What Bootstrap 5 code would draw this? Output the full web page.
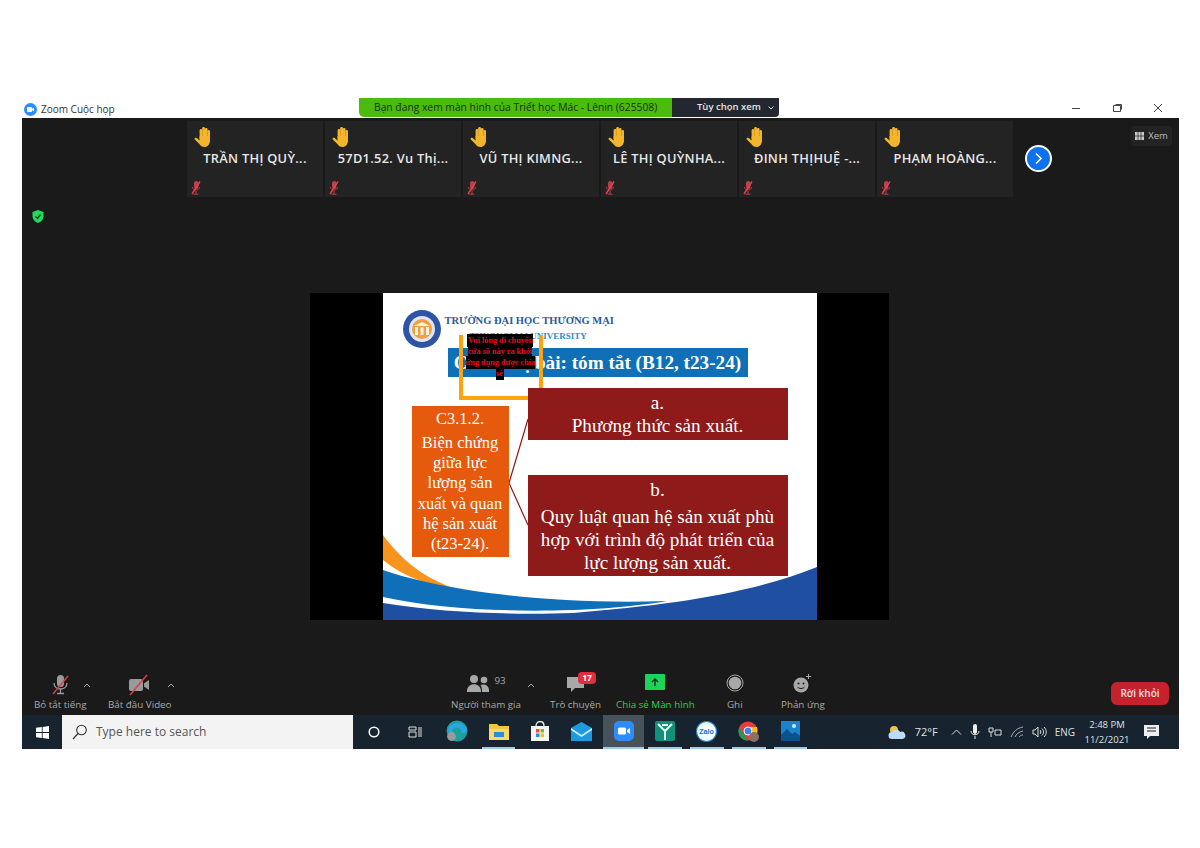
<!DOCTYPE html>
<html lang="vi">
<head>
  <meta charset="UTF-8" />
  <title>Zoom Cuộc họp</title>
  <link href="https://cdn.jsdelivr.net/npm/bootstrap@5.3.3/dist/css/bootstrap.min.css" rel="stylesheet" />
  <style>
    body { background: #fff; font-family: "Open Sans", "Liberation Sans", sans-serif; overflow: hidden; }
    .zwin { margin: 98px 0 0 22px; width: 1157px; }
    .ztitle { height: 20px; font-size: 10px; color: #333; }
    .ztitle-app { width: 337px; padding: 2px 0 0 2px; gap: 4px; }
    .zlogo { width: 13px; height: 13px; border-radius: 50%; background: #2d8cff; }
    .zbanner { width: 313px; height: 19px; padding-left: 15px; background: #4bbb0c; color: #16300a; font-size: 10.3px; border-bottom-left-radius: 5px; white-space: nowrap; }
    .zbanner-btn { width: 107px; height: 19px; padding-left: 25px; gap: 7px; background: #232730; color: #e4e4e4; font-size: 9.5px; font-weight: 600; border-bottom-right-radius: 4px; white-space: nowrap; }
    .zcontrols { margin-left: auto; width: 92px; margin-right: 16px; color: #444; }
    .zstage { height: 597px; background: #1a1a1a; }
    .zstrip { height: 82px; padding: 3px 0 0 165px; gap: 2px; }
    .ztile { width: 136px; height: 76px; background: #232323; color: #e8e8e8; font-size: 12.8px; font-weight: 600; padding: 5px 0 0 7px; }
    .ztile-name { margin: 2px 0 0 -7px; height: 23px; text-align: center; white-space: nowrap; letter-spacing: .3px; }
    .zmute { margin: 9px 0 0 -3px; }
    .znext { width: 27px; height: 27px; margin: 24px 0 0 10px; border-radius: 50%; background: #0e72ed; border: 2px solid #fff; }
    .zview { width: 41px; height: 20px; margin: 5px 7px 0 auto; border-radius: 4px; background: #232323; color: #bbb; font-size: 9.5px; }
    .zshield { height: 36px; padding: 3px 0 0 10px; }
    .zshare-row { height: 327px; margin-top: 57px; padding-left: 288px; }
    .zshare { width: 579px; height: 327px; background: #000; }
    .zslide { position: relative; width: 434px; height: 327px; background: #fff; font-family: "Liberation Serif", serif; overflow: hidden; }
    .zslide > * { position: absolute; }
    .sl-art { left: 0; top: 0; }
    .sl-uni1 { left: 62px; top: 20px; font-size: 10.5px; font-weight: 700; color: #2a5a9a; white-space: nowrap; }
    .sl-uni2 { left: 87px; top: 37px; font-size: 9px; font-weight: 700; color: #2c8fc4; white-space: nowrap; }
    .sl-head { left: 65px; top: 55px; width: 300px; height: 29px; background: #0f70b7; color: #fff; font-size: 19.2px; font-weight: 700; line-height: 29px; text-align: center; white-space: nowrap; }
    .sl-warn { left: 83px; top: 42px; width: 69px; text-align: center; font-size: 8.2px; font-weight: 700; line-height: 11px; color: #e01020; white-space: nowrap; }
    .sl-warn span { background: #000; padding: 2px 1px; }
    .sl-frame { left: 76px; top: 42px; width: 84px; height: 65px; border: 4px solid #fca311; border-top: 0; }
    .sl-orange { left: 29px; top: 113px; width: 97px; height: 151px; background: #e55a0c; color: #fff; font-size: 16.5px; line-height: 20.2px; text-align: center; white-space: nowrap; }
    .sl-code { line-height: 25px; margin-bottom: 2px; }
    .sl-red { left: 145px; width: 260px; background: #8e1a1a; color: #fff; text-align: center; font-size: 19.2px; line-height: 23px; padding-top: 3px; white-space: nowrap; }
    .sl-a { top: 95px; height: 52px; }
    .sl-b { top: 182px; height: 101px; }
    .sl-b-mark { margin-bottom: 4px; }
    .zbar { position: relative; height: 50px; margin-top: -50px; background: #1a1a1a; color: #a9a9a9; font-size: 9.8px; padding-top: 9px; }
    .zbtn { height: 38px; text-align: center; flex-shrink: 0; }
    .zicon { position: relative; display: flex; justify-content: center; height: 24px; }
    .zlabel { white-space: nowrap; line-height: 13px; }
    .zcaret { margin-top: 8px; }
    .zb-mic { margin-left: 12px; width: 52px; }
    .zb-video { margin-left: 17px; width: 62px; }
    .zb-people { margin-left: 276px; width: 70px; gap: 4px; }
    .zb-chat { margin-left: 15px; width: 51px; }
    .zb-share { margin-left: 15px; width: 78px; color: #22d355; }
    .zb-rec { margin-left: 33px; width: 15px; }
    .zb-react { margin-left: 39px; width: 42px; }
    .zc-tight { margin-left: -3px; }
    .zc-wide { margin-left: 6px; }
    .zbadge { position: absolute; left: 28px; top: -2px; width: 18px; height: 12px; background: #e02f3c; border-radius: 4px; color: #fff; font-size: 8.5px; font-weight: 700; line-height: 12px; text-align: center; }
    .zleave { width: 58px; height: 23px; margin: 8px 10px 0 auto; background: #c4232d; color: #f2e0e0; font-size: 10px; font-weight: 600; border-radius: 6px; }
    .ztask { height: 34px; background: #17242f; color: #dfe3e6; font-size: 10.5px; }
    .zstart { width: 40px; }
    .zsearch { width: 291px; height: 34px; background: #f3f3f3; color: #555; font-size: 12px; padding-left: 10px; gap: 8px; }
    .zcortana { width: 41px; }
    .ztaskview { width: 42px; }
    .zslot { width: 33.7px; height: 34px; margin: 0 4px; border-bottom: 2px solid transparent; }
    .zslot-on { border-bottom-color: #9ccbef; }
    .zslot-act { width: 41.7px; margin: 0; background: #47525b; }
    .ztray { margin-left: auto; padding-right: 20px; gap: 8px; }
    .ztemp { width: 24px; font-size: 11px; }
    .zeng { font-size: 10px; }
    .zclock { font-size: 9.5px; line-height: 15px; text-align: center; width: 48px; margin-right: 5px; }
  </style>
</head>
<body>
  <svg width="0" height="0" class="d-block">
    <symbol id="hand" viewBox="0 0 18 20">
      <g fill="#f2b52c">
        <rect x="5.6" y="2" width="2.8" height="11" rx="1.4"/>
        <rect x="8.2" y="0" width="2.8" height="12" rx="1.4"/>
        <rect x="10.8" y="1" width="2.8" height="11" rx="1.4"/>
        <rect x="13.4" y="3" width="2.6" height="10" rx="1.3"/>
        <path d="M5.6 9h10.4v4.500c0 4-2.500 6.500-5.600 6.500-2.400 0-3.800-1.200-5-3L.8 12.600c-.9-1.200.7-2.600 1.900-1.600l2.900 2.400z"/>
      </g>
    </symbol>
    <symbol id="mutemic" viewBox="0 0 10 14">
      <rect x="3" y="0" width="4.4" height="8" rx="2.2" fill="#b8404c"/>
      <path d="M1.500 6c0 4 7 4 7 0M5 10v3M2.500 13.200h5" fill="none" stroke="#b8404c" stroke-width="1"/>
      <path d="M9 .5 1 13" stroke="#e8404c" stroke-width="1.400"/>
    </symbol>
  </svg>

  <div class="zwin">
    <div class="ztitle d-flex">
      <div class="ztitle-app d-flex align-items-center">
        <span class="zlogo d-flex align-items-center justify-content-center"><svg width="7" height="5" viewBox="0 0 7 5"><rect width="5" height="5" rx="1" fill="#fff"/><path d="M5 2l2-1.500v4L5 3z" fill="#fff"/></svg></span>
        <span>Zoom Cuộc họp</span>
      </div>
      <div class="zbanner d-flex align-items-center">Bạn đang xem màn hình của Triết học Mác - Lênin (625508)</div>
      <div class="zbanner-btn d-flex align-items-center">Tùy chọn xem <svg width="6" height="4" viewBox="0 0 6 4"><path d="M.5.500 3 3l2.500-2.500" fill="none" stroke="#ddd"/></svg></div>
      <div class="zcontrols d-flex align-items-center justify-content-between">
        <svg width="10" height="10" viewBox="0 0 10 10"><path d="M1 5.500h8" stroke="#444"/></svg>
        <svg width="10" height="10" viewBox="0 0 10 10"><path d="M1.500 2.500h7v6h-7z" fill="none" stroke="#444"/><path d="M3.500 1.500h6v5" fill="none" stroke="#444"/></svg>
        <svg width="10" height="10" viewBox="0 0 10 10"><path d="M1 1l8 8M9 1l-8 8" stroke="#444"/></svg>
      </div>
    </div>

    <div class="zstage">
      <div class="zstrip d-flex">
        <div class="ztile"><svg width="18" height="20"><use href="#hand"/></svg><div class="ztile-name">TRẦN THỊ QUỲ...</div><svg class="zmute d-block" width="10" height="14"><use href="#mutemic"/></svg></div>
        <div class="ztile"><svg width="18" height="20"><use href="#hand"/></svg><div class="ztile-name">57D1.52. Vu Thị...</div><svg class="zmute d-block" width="10" height="14"><use href="#mutemic"/></svg></div>
        <div class="ztile"><svg width="18" height="20"><use href="#hand"/></svg><div class="ztile-name">VŨ THỊ KIMNG...</div><svg class="zmute d-block" width="10" height="14"><use href="#mutemic"/></svg></div>
        <div class="ztile"><svg width="18" height="20"><use href="#hand"/></svg><div class="ztile-name">LÊ THỊ QUỲNHA...</div><svg class="zmute d-block" width="10" height="14"><use href="#mutemic"/></svg></div>
        <div class="ztile"><svg width="18" height="20"><use href="#hand"/></svg><div class="ztile-name">ĐINH THỊHUỆ -...</div><svg class="zmute d-block" width="10" height="14"><use href="#mutemic"/></svg></div>
        <div class="ztile"><svg width="18" height="20"><use href="#hand"/></svg><div class="ztile-name">PHẠM HOÀNG...</div><svg class="zmute d-block" width="10" height="14"><use href="#mutemic"/></svg></div>
        <div class="znext d-flex align-items-center justify-content-center flex-shrink-0"><svg width="9" height="13" viewBox="0 0 9 13"><path d="M2 1.500 7 6.500 2 11.500" fill="none" stroke="#fff" stroke-width="1.600"/></svg></div>
        <div class="zview d-flex align-items-center justify-content-center gap-1 flex-shrink-0"><svg width="9" height="8" viewBox="0 0 9 8"><path d="M0 0h9v8H0z" fill="#c9c9c9"/><path d="M3 0v8M6 0v8M0 4h9" stroke="#232323" stroke-width=".7"/></svg>Xem</div>
      </div>

      <div class="zshield"><svg width="12" height="13" viewBox="0 0 12 13"><path d="M6 0l5.500 2v4.500c0 3-2.500 5.300-5.500 6.500C3 11.800.5 9.500.5 6.500V2z" fill="#23d959"/><path d="M3.500 6.500 5.500 8.500 8.500 4.500" fill="none" stroke="#14492a" stroke-width="1.400"/></svg></div>

      <div class="zshare-row d-flex">
        <div class="zshare d-flex justify-content-center">
          <div class="zslide">
            <svg class="sl-art" width="434" height="327" viewBox="0 0 434 327">
              <circle cx="39" cy="36" r="19" fill="#2f54a6"/>
              <circle cx="39" cy="36" r="13" fill="#dfe7f3"/>
              <circle cx="39" cy="36" r="10" fill="#f0a040"/>
              <path d="M32 42v-8h3v8zM37.500 42v-8h3v8zM43 42v-8h3v8zM31 33l8-4 8 4z" fill="#fff3dd"/>
              <path d="M126 190 145 126M126 190 145 232" fill="none" stroke="#8e1a1a" stroke-width="1.200"/>
              <path d="M0 242C22 272 50 292 92 301 50 294 20 284 0 267z" fill="#f7941d"/>
              <path d="M0 277C60 298 170 312 284 308 210 321 80 322 0 304z" fill="#0f6fb8"/>
              <path d="M0 310C60 320 130 322 190 320 290 312 370 300 434 274V327H0z" fill="#1e4fa0"/>
            </svg>
            <div class="sl-uni1">TRƯỜNG ĐẠI HỌC THƯƠNG MẠI</div>
            <div class="sl-uni2">THUONGMAI UNIVERSITY</div>
            <div class="sl-head">Chuẩn bị bài: tóm tắt (B12, t23-24)</div>
            <div class="sl-warn"><span>Vui lòng di chuyển<br>cửa sổ này ra khỏi<br>ứng dụng được chia<br>sẻ</span></div>
            <div class="sl-frame"></div>
            <div class="sl-orange"><div class="sl-code">C3.1.2.</div>Biện chứng<br>giữa lực<br>lượng sản<br>xuất và quan<br>hệ sản xuất<br>(t23-24).</div>
            <div class="sl-red sl-a">a.<br>Phương thức sản xuất.</div>
            <div class="sl-red sl-b"><div class="sl-b-mark">b.</div>Quy luật quan hệ sản xuất phù<br>hợp với trình độ phát triển của<br>lực lượng sản xuất.</div>
          </div>
        </div>
      </div>
    </div>

    <div class="zbar d-flex">
      <div class="zbtn zb-mic">
        <div class="zicon"><svg width="20" height="22" viewBox="0 0 20 22"><rect x="7" y="1" width="7" height="12" rx="3.500" fill="#9a9a9a"/><path d="M4 9c0 8 13 8 13 0M10.500 15v4M7 19.500h7" fill="none" stroke="#9a9a9a" stroke-width="1.300"/><path d="M18 2 3 20" stroke="#d6404c" stroke-width="1.500"/></svg></div>
        <div class="zlabel">Bỏ tắt tiếng</div>
      </div>
      <svg class="zcaret zc-tight" width="8" height="6" viewBox="0 0 8 6"><path d="M1 5l3-3 3 3" fill="none" stroke="#aaa"/></svg>
      <div class="zbtn zb-video">
        <div class="zicon"><svg width="24" height="22" viewBox="0 0 24 22"><rect x="2" y="5" width="14" height="12" rx="2" fill="#9a9a9a"/><path d="M17 9.500 22 6v10l-5-3.500z" fill="#9a9a9a"/><path d="M20 1 3 21" stroke="#d6404c" stroke-width="1.500"/></svg></div>
        <div class="zlabel">Bắt đầu Video</div>
      </div>
      <svg class="zcaret zc-tight" width="8" height="6" viewBox="0 0 8 6"><path d="M1 5l3-3 3 3" fill="none" stroke="#aaa"/></svg>

      <div class="zbtn zb-people">
        <div class="zicon gap-1"><svg width="24" height="19" viewBox="0 0 24 19"><circle cx="8" cy="5" r="4" fill="#a8a8a8"/><circle cx="18" cy="6" r="3.300" fill="#a8a8a8"/><path d="M1 17c0-9 14-9 14 0v1H1zM16 17c0-3-.5-4.500-1.500-6 3-1.500 8.500 0 8.500 5v2h-7z" fill="#a8a8a8"/></svg><span>93</span></div>
        <div class="zlabel">Người tham gia</div>
      </div>
      <svg class="zcaret zc-wide" width="8" height="6" viewBox="0 0 8 6"><path d="M1 5l3-3 3 3" fill="none" stroke="#aaa"/></svg>
      <div class="zbtn zb-chat">
        <div class="zicon"><svg width="18" height="19" viewBox="0 0 18 19"><path d="M0 3h17v11H8l-4 4v-4H0z" fill="#a8a8a8"/></svg><span class="zbadge">17</span></div>
        <div class="zlabel">Trò chuyện</div>
      </div>
      <div class="zbtn zb-share">
        <div class="zicon"><svg width="20" height="17" viewBox="0 0 20 17"><rect width="20" height="16" rx="1" fill="#1fd35a"/><path d="M10 12V5M7 8l3-3 3 3" fill="none" stroke="#12331f" stroke-width="1.400"/></svg></div>
        <div class="zlabel">Chia sẻ Màn hình</div>
      </div>
      <div class="zbtn zb-rec">
        <div class="zicon"><svg width="18" height="18" viewBox="0 0 18 18" class="flex-shrink-0"><circle cx="9" cy="9" r="8" fill="none" stroke="#a8a8a8"/><circle cx="9" cy="9" r="6.300" fill="#a8a8a8"/></svg></div>
        <div class="zlabel">Ghi</div>
      </div>
      <div class="zbtn zb-react">
        <div class="zicon"><svg width="18" height="19" viewBox="0 0 18 19"><circle cx="8" cy="11" r="7.500" fill="#a8a8a8"/><circle cx="5.500" cy="9.500" r="1" fill="#1a1a1a"/><circle cx="10.500" cy="9.500" r="1" fill="#1a1a1a"/><path d="M4.500 13c1.500 2 5.500 2 7 0" fill="none" stroke="#1a1a1a"/><path d="M15.500 0v5M13 2.500h5" stroke="#a8a8a8"/></svg></div>
        <div class="zlabel">Phản ứng</div>
      </div>
      <div class="zleave d-flex align-items-center justify-content-center">Rời khỏi</div>
    </div>

    <div class="ztask d-flex align-items-center">
      <div class="zstart d-flex justify-content-center"><svg width="13" height="13" viewBox="0 0 13 13"><path d="M0 1.800 5.800 1v5H0zM6.600.9 13 0v6H6.600zM0 7h5.800v5L0 11.200zM6.600 7H13v6l-6.400-.9z" fill="#fff"/></svg></div>
      <div class="zsearch d-flex align-items-center"><svg width="16" height="16" viewBox="0 0 16 16"><circle cx="9.500" cy="6" r="4.800" fill="none" stroke="#333" stroke-width="1.100"/><path d="M6 9.500 1 15" stroke="#333" stroke-width="1.200"/></svg>Type here to search</div>
      <div class="zcortana d-flex justify-content-center"><svg width="12" height="12" viewBox="0 0 12 12"><circle cx="6" cy="6" r="4.800" fill="none" stroke="#fff" stroke-width="1.500"/></svg></div>
      <div class="ztaskview d-flex justify-content-center"><svg width="14" height="12" viewBox="0 0 14 12"><path d="M1 1h7v3H1zM1 6h7v5H1zM11 1v10M13 1v10" fill="none" stroke="#ddd"/></svg></div>
      <div class="zslot d-flex align-items-center justify-content-center"><svg width="22" height="22" viewBox="0 0 20 20"><circle cx="10" cy="10" r="9.500" fill="#1d9f9d"/><path d="M2 9C3 2 15 0 19 8c.5 3-2 4-5 4 1-4-4-7-7-4-2 2-1 6 1 9C4 16 2 13 2 9z" fill="#2aa6e0"/><circle cx="5" cy="15" r="4" fill="#9a9a9a"/></svg></div>
      <div class="zslot zslot-on d-flex align-items-center justify-content-center"><svg width="20" height="17" viewBox="0 0 20 17"><path d="M0 1h8l2 2h10v14H0z" fill="#f4c542"/><path d="M0 6h20v11H0z" fill="#fbd968"/><rect x="5" y="9" width="10" height="5" fill="#2b8cd8"/></svg></div>
      <div class="zslot d-flex align-items-center justify-content-center"><svg width="20" height="20" viewBox="0 0 20 20"><path d="M1 5h18v15H1z" fill="#f5f5f5"/><path d="M6 5c0-6 8-6 8 0" fill="none" stroke="#eee" stroke-width="1.300"/><path d="M6 8h3.500v3.500H6z" fill="#e8502f"/><path d="M10.500 8H14v3.500h-3.500z" fill="#7cb92c"/><path d="M6 12.500h3.500V16H6z" fill="#2b8cd8"/><path d="M10.500 12.500H14V16h-3.500z" fill="#f4bc2c"/></svg></div>
      <div class="zslot d-flex align-items-center justify-content-center"><svg width="21" height="19" viewBox="0 0 21 19"><path d="M0 6 10.500 0 21 6v13H0z" fill="#1d9be0"/><path d="M0 6l10.500 7L21 6v2L10.500 15 0 8z" fill="#d8f0fb"/></svg></div>
      <div class="zslot zslot-on zslot-act d-flex align-items-center justify-content-center"><svg width="20" height="20" viewBox="0 0 20 20"><rect width="20" height="20" rx="5" fill="#2d8cff"/><rect x="4" y="6.500" width="8" height="7" rx="1.500" fill="#fff"/><path d="M13 9l3-2v6l-3-2z" fill="#fff"/></svg></div>
      <div class="zslot zslot-on d-flex align-items-center justify-content-center"><svg width="20" height="20" viewBox="0 0 20 20"><rect width="20" height="20" rx="2" fill="#10927a"/><path d="M10 19V10M3 3l7 7 7-7M7 4h6" fill="none" stroke="#e9f7f2" stroke-width="2"/></svg></div>
      <div class="zslot zslot-on d-flex align-items-center justify-content-center"><svg width="21" height="21" viewBox="0 0 21 21"><circle cx="10.500" cy="10.500" r="10" fill="#f4fbff" stroke="#1d86dd" stroke-width="1.200"/><text x="10.500" y="13" text-anchor="middle" font-size="7" font-weight="700" font-family="Liberation Sans, sans-serif" fill="#1d6fd0">Zalo</text></svg></div>
      <div class="zslot zslot-on d-flex align-items-center justify-content-center"><svg width="21" height="21" viewBox="0 0 21 21"><circle cx="10" cy="10" r="9.500" fill="#dd4437"/><path d="M1.500 6 6 14l4 5.500C4 20 .5 15 .5 10c0-1.500.3-3 1-4z" fill="#1f9d55"/><path d="M10 6h9c1 3 .5 7-2 10l-5 3.500z" fill="#f5bd1f"/><circle cx="10" cy="10" r="4" fill="#3d82ee" stroke="#fff"/><circle cx="16" cy="16" r="5" fill="#8c6e64"/></svg></div>
      <div class="zslot zslot-on d-flex align-items-center justify-content-center"><svg width="20" height="20" viewBox="0 0 20 20"><path d="M1 0h19v20H1z" fill="#1785cc"/><path d="M1 14l6-6 5 5 3-2 5 4v5H1z" fill="#0e4f8e"/><circle cx="14" cy="5" r="2" fill="#cfeeff"/></svg></div>

      <div class="ztray d-flex align-items-center">
        <svg width="19" height="15" viewBox="0 0 19 15"><circle cx="6" cy="5" r="4" fill="#f5c242"/><path d="M4 14a3.500 3.500 0 0 1 0-7c1-3 7-3 8 0a3.500 3.500 0 0 1 3 7z" fill="#bcdcf5"/></svg>
        <span class="ztemp">72°F</span>
        <svg class="ms-1" width="11" height="6" viewBox="0 0 11 6"><path d="M1 5.500l4.500-4.500 4.500 4.500" fill="none" stroke="#ddd"/></svg>
        <svg width="10" height="16" viewBox="0 0 10 16"><rect x="3" y="0" width="4" height="10" rx="2" fill="#eee"/><path d="M1 7c0 5 8 5 8 0M5 12v3" fill="none" stroke="#eee"/></svg>
        <svg width="14" height="11" viewBox="0 0 14 11"><path d="M1 1h4v4H1zM7 3h6v5H7z" fill="none" stroke="#ddd"/><path d="M3 5v5" stroke="#ddd"/></svg>
        <svg width="14" height="12" viewBox="0 0 14 12"><path d="M1 11C3 6 7 2 13 1M5 11c1-3 4-5 8-6M9 11c1-1 2-2 4-2" fill="none" stroke="#aaa"/></svg>
        <svg width="15" height="12" viewBox="0 0 15 12"><path d="M1 4h2l3-3v10L3 8H1z" fill="none" stroke="#ddd"/><path d="M8 4c1 1 1 3 0 4M10 2.500c2 2 2 5 0 7M12 1c3 3 3 7 0 10" fill="none" stroke="#ddd"/></svg>
        <span class="zeng">ENG</span>
        <div class="zclock">2:48 PM<br>11/2/2021</div>
        <svg width="15" height="14" viewBox="0 0 15 14"><path d="M0 0h15v11H6l-3 3v-3H0z" fill="#eee"/><path d="M3 3h9M3 6h9" stroke="#17242f"/></svg>
      </div>
    </div>
  </div>
  <script src="https://cdn.jsdelivr.net/npm/bootstrap@5.3.3/dist/js/bootstrap.bundle.min.js"></script>
</body>
</html>
